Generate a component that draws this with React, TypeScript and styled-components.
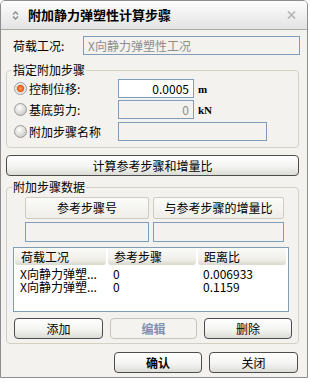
import React from 'react';
import styled, { createGlobalStyle } from 'styled-components';

const GlobalStyle = createGlobalStyle`
  body {
    margin: 0;
    background: #ffffff;
    font-family: 'Noto Sans CJK SC', 'Noto Sans', sans-serif;
    font-size: 12px;
    color: #000000;
  }
`;

const Window = styled.div`
  width: 308px;
  height: 378px;
  box-sizing: border-box;
  border: 1px solid #8d8d8d;
  border-radius: 5px 5px 0 0;
  background: #f3f2ee;
  display: flex;
  flex-direction: column;
  overflow: hidden;
`;

const TitleBar = styled.div`
  height: 29px;
  flex: none;
  box-sizing: border-box;
  display: flex;
  align-items: center;
  padding: 0 11px 0 11px;
  background: linear-gradient(#fdfdfd, #e3e3e3);
  border-bottom: 1px solid #a9a9a9;
`;

const Title = styled.div`
  margin-left: 9px;
  font-size: 13px;
  font-weight: bold;
  line-height: 14px;
`;

const Close = styled.div`
  margin-left: auto;
  display: flex;
`;

const Body = styled.div`
  flex: 1;
  display: flex;
  flex-direction: column;
  padding: 0 8px 0 5px;
`;

const Row = styled.div<{ $top?: number; $left?: number }>`
  display: flex;
  align-items: center;
  margin-top: ${p => p.$top ?? 0}px;
  padding-left: ${p => p.$left ?? 0}px;
`;

const Label = styled.div<{ $width: number }>`
  width: ${p => p.$width}px;
  flex: none;
  line-height: 14px;
  white-space: nowrap;
`;

const Field = styled.div<{ $width: number; $height?: number; $white?: boolean; $right?: boolean; $muted?: boolean }>`
  width: ${p => p.$width}px;
  height: ${p => p.$height ?? 19}px;
  flex: none;
  box-sizing: border-box;
  border: 1px solid #7f9db9;
  background: ${p => (p.$white ? '#ffffff' : '#f3f2ee')};
  padding: 0 4px;
  line-height: ${p => (p.$height ?? 19) - 2}px;
  text-align: ${p => (p.$right ? 'right' : 'left')};
  color: ${p => (p.$muted ? '#8d8d8d' : '#000000')};
  white-space: nowrap;
  overflow: hidden;
`;

const Unit = styled.span`
  margin-left: 4px;
  font-family: 'Liberation Serif', serif;
  font-size: 11px;
  font-weight: bold;
`;

const Group = styled.fieldset<{ $top: number; $bottom: number }>`
  margin: ${p => p.$top}px 0 0;
  padding: 2px 0 ${p => p.$bottom}px;
  border: 1px solid #d3d1c5;
  border-radius: 4px;
  min-width: 0;
`;

const Legend = styled.legend`
  margin-left: 5px;
  padding: 0 1px;
  line-height: 14px;
  font-size: 12px;
`;

const Radio = styled.span<{ $checked?: boolean }>`
  width: 13px;
  height: 13px;
  flex: none;
  box-sizing: border-box;
  border-radius: 50%;
  border: 1px solid #9c9c9c;
  margin-right: 2px;
  background: ${p =>
    p.$checked
      ? 'radial-gradient(circle at 50% 50%, #ff9a52 0, #ec5b1c 3.2px, #d8d8d4 4px, #f7f7f5 5.5px)'
      : 'radial-gradient(circle at 40% 35%, #ffffff 0, #dadad6 55%, #b9b9b5 100%)'};
`;

const Button = styled.div<{ $width?: number; $bold?: boolean; $disabled?: boolean; $top?: number }>`
  width: ${p => (p.$width ? `${p.$width}px` : 'auto')};
  height: 21px;
  flex: none;
  box-sizing: border-box;
  margin-top: ${p => p.$top ?? 0}px;
  border: 1px solid ${p => (p.$disabled ? '#c6c4ba' : '#4d4d4d')};
  border-radius: 4px;
  background: ${p => (p.$disabled ? '#f4f3ef' : 'linear-gradient(#ffffff 0%, #f4f4f2 55%, #dcdcd6 100%)')};
  color: ${p => (p.$disabled ? '#8190b0' : '#000000')};
  font-weight: ${p => (p.$bold || p.$disabled ? 'bold' : 'normal')};
  display: flex;
  align-items: center;
  justify-content: center;
  line-height: 14px;
`;

const ButtonRow = styled.div<{ $top: number; $left?: number; $end?: boolean }>`
  display: flex;
  gap: 7px;
  margin-top: ${p => p.$top}px;
  padding-left: ${p => p.$left ?? 0}px;
  justify-content: ${p => (p.$end ? 'flex-end' : 'flex-start')};
  padding-right: ${p => (p.$end ? 1 : 0)}px;
`;

const Caption = styled.div<{ $width: number }>`
  width: ${p => p.$width}px;
  height: 22px;
  box-sizing: border-box;
  border: 1px solid #cfcdc2;
  border-radius: 2px;
  background: linear-gradient(#fbfbf9, #efeee9);
  display: flex;
  align-items: center;
  justify-content: center;
  line-height: 14px;
`;

const Pair = styled.div<{ $top: number }>`
  display: flex;
  gap: 4px;
  margin-top: ${p => p.$top}px;
  padding-left: 18px;
`;

const ListBox = styled.div`
  width: 276px;
  height: 65px;
  box-sizing: border-box;
  margin: 5px 0 0 6px;
  border: 1px solid #7f9db9;
  background: #ffffff;
  padding: 0 1px;
`;

const ListHead = styled.div`
  display: flex;
  gap: 2px;
  height: 17px;
`;

const HeadCell = styled.div<{ $width: number }>`
  width: ${p => p.$width}px;
  box-sizing: border-box;
  padding-left: 6px;
  background: linear-gradient(#fafaf8 0%, #efeee8 70%, #d9d8ce 100%);
  border-radius: 0 0 3px 3px;
  line-height: 17px;
`;

const ListRow = styled.div<{ $first?: boolean }>`
  display: flex;
  gap: 2px;
  margin-top: ${p => (p.$first ? 2 : 0)}px;
  height: 13px;
  line-height: 13px;
`;

const Cell = styled.div<{ $width: number }>`
  width: ${p => p.$width}px;
  padding-left: 5px;
  box-sizing: border-box;
  white-space: nowrap;
`;

const cols = [91, 88, 88];

const rows = [
  ['X向静力弹塑...', '0', '0.006933'],
  ['X向静力弹塑...', '0', '0.1159'],
];

function TitleIcon() {
  return (
    <svg width="7" height="9" viewBox="0 0 7 9">
      <path d="M1 3.5 L3.5 1 L6 3.5 M1 5.5 L3.5 8 L6 5.5" fill="none" stroke="#8a8a8a" strokeWidth="1.3" />
    </svg>
  );
}

function CloseIcon() {
  return (
    <svg width="9" height="8" viewBox="0 0 9 8">
      <path d="M1 0.5 L8 7.5 M8 0.5 L1 7.5" stroke="#b3b3b3" strokeWidth="1.6" />
    </svg>
  );
}

export default function App() {
  return (
    <>
      <GlobalStyle />
      <Window>
        <TitleBar>
          <TitleIcon />
          <Title>附加静力弹塑性计算步骤</Title>
          <Close>
            <CloseIcon />
          </Close>
        </TitleBar>
        <Body>
          <Row $top={6} $left={7}>
            <Label $width={70}>荷载工况:</Label>
            <Field $width={217} $muted>X向静力弹塑性工况</Field>
          </Row>

          <Group $top={8} $bottom={6}>
            <Legend>指定附加步骤</Legend>
            <Row $left={7}>
              <Radio $checked />
              <Label $width={89}>控制位移:</Label>
              <Field $width={76} $white $right>0.0005</Field>
              <Unit>m</Unit>
            </Row>
            <Row $top={2} $left={7}>
              <Radio />
              <Label $width={89}>基底剪力:</Label>
              <Field $width={76} $right $muted>0</Field>
              <Unit>kN</Unit>
            </Row>
            <Row $top={3} $left={7}>
              <Radio />
              <Label $width={89}>附加步骤名称</Label>
              <Field $width={149} />
            </Row>
          </Group>

          <Button $top={7}>计算参考步骤和增量比</Button>

          <Group $top={4} $bottom={4}>
            <Legend>附加步骤数据</Legend>
            <Pair $top={1}>
              <Caption $width={124}>参考步骤号</Caption>
              <Caption $width={131}>与参考步骤的增量比</Caption>
            </Pair>
            <Pair $top={3}>
              <Field $width={124} $height={20} />
              <Field $width={131} $height={20} />
            </Pair>
            <ListBox>
              <ListHead>
                <HeadCell $width={cols[0]}>荷载工况</HeadCell>
                <HeadCell $width={cols[1]}>参考步骤</HeadCell>
                <HeadCell $width={cols[2]}>距离比</HeadCell>
              </ListHead>
              {rows.map((r, i) => (
                <ListRow key={i} $first={i === 0}>
                  {r.map((v, j) => (
                    <Cell key={j} $width={cols[j]}>{v}</Cell>
                  ))}
                </ListRow>
              ))}
            </ListBox>
            <ButtonRow $top={6} $left={7}>
              <Button $width={89}>添加</Button>
              <Button $width={87} $disabled>编辑</Button>
              <Button $width={88}>删除</Button>
            </ButtonRow>
          </Group>

          <ButtonRow $top={8} $end>
            <Button $width={88} $bold>确认</Button>
            <Button $width={89}>关闭</Button>
          </ButtonRow>
        </Body>
      </Window>
    </>
  );
}
